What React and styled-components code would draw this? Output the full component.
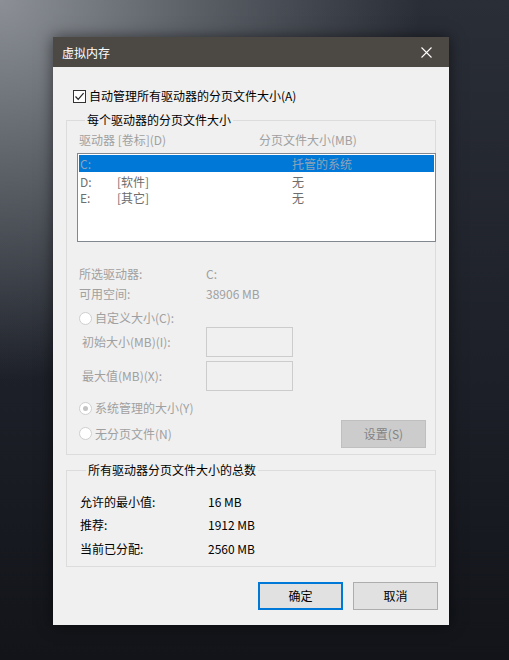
import React from 'react';
import styled, { createGlobalStyle } from 'styled-components';

const GlobalStyle = createGlobalStyle`
  html, body {
    margin: 0;
    padding: 0;
  }
  body {
    width: 509px;
    height: 660px;
    overflow: hidden;
    background:
      radial-gradient(ellipse 420px 380px at 0px 0px, #8c9096 0%, #5c6168 45%, rgba(40, 44, 54, 0) 100%),
      linear-gradient(180deg, #2a2e37 0%, #1c1f27 60%, #121419 100%);
    font-family: 'Noto Sans CJK SC', 'Noto Sans', sans-serif;
    font-size: 12px;
  }
`;

const Page = styled.div`
  padding: 37px 0 0 53px;
`;

const Dialog = styled.div`
  width: 396px;
  height: 588px;
  background: #f0f0f0;
  box-shadow: 0 0 14px rgba(0, 0, 0, 0.55);
  display: flex;
  flex-direction: column;
  color: #000;
`;

const TitleBar = styled.div`
  height: 30px;
  flex: none;
  background: #4c4844;
  display: flex;
  align-items: center;
  justify-content: space-between;
  padding-left: 9px;
  color: #fff;
  font-size: 12px;
`;

const CloseButton = styled.div`
  width: 46px;
  height: 30px;
  display: flex;
  align-items: center;
  justify-content: center;
  padding-left: 12px;
`;

const Body = styled.div`
  padding: 0 13px;
  display: flex;
  flex-direction: column;
`;

const Line = styled.div`
  display: flex;
  align-items: center;
  height: ${(p) => p.$h || 16}px;
  margin-top: ${(p) => p.$mt || 0}px;
  line-height: 16px;
  white-space: nowrap;
  color: ${(p) => (p.$disabled ? '#a0a0a0' : '#000')};
`;

const CheckBox = styled.span`
  width: 13px;
  height: 13px;
  box-sizing: border-box;
  border: 1px solid #333;
  background: #fff;
  margin: 0 3px 0 7px;
  display: flex;
  align-items: center;
  justify-content: center;
`;

const Group = styled.fieldset`
  margin: ${(p) => p.$mt}px 0 0 0;
  padding: ${(p) => p.$pad};
  border: 1px solid #dcdcdc;
  min-width: 0;
  display: flex;
  flex-direction: column;
`;

const Legend = styled.legend`
  padding: 0 2px;
  margin-left: 6px;
  line-height: 16px;
  color: #000;
`;

const Col = styled.span`
  width: ${(p) => p.$w}px;
  padding-left: ${(p) => p.$indent || 0}px;
  box-sizing: border-box;
  flex: none;
`;

const ListBox = styled.div`
  width: 359px;
  height: 89px;
  box-sizing: border-box;
  margin: 5px 0 0 -2px;
  border: 1px solid #828790;
  background: #fff;
  padding: 1px;
`;

const ListRow = styled.div`
  display: flex;
  height: 17px;
  align-items: center;
  padding-left: 1px;
  background: ${(p) => (p.$selected ? '#0078d7' : 'transparent')};
  color: ${(p) => (p.$selected ? '#8fa3b8' : '#6d6d6d')};
  line-height: 16px;
  margin-bottom: ${(p) => (p.$selected ? 1 : -1)}px;
`;

const Radio = styled.span`
  width: 13px;
  height: 13px;
  box-sizing: border-box;
  border-radius: 50%;
  border: 1px solid #cfcfcf;
  background: #fff;
  margin-right: 3px;
  display: flex;
  align-items: center;
  justify-content: center;
  &::after {
    content: '';
    width: 5px;
    height: 5px;
    border-radius: 50%;
    background: ${(p) => (p.$checked ? '#c4c4c4' : 'transparent')};
  }
`;

const TextInput = styled.div`
  width: 87px;
  height: 30px;
  box-sizing: border-box;
  border: 1px solid #cccccc;
  background: #f0f0f0;
`;

const Button = styled.div`
  width: 85px;
  height: 28px;
  box-sizing: border-box;
  display: flex;
  align-items: center;
  justify-content: center;
  background: ${(p) => (p.$disabled ? '#cccccc' : '#e1e1e1')};
  border: ${(p) =>
    p.$primary ? '2px solid #0078d7' : p.$disabled ? '1px solid #bfbfbf' : '1px solid #adadad'};
  color: ${(p) => (p.$disabled ? '#838383' : '#000')};
  line-height: 16px;
`;

const SetButton = styled(Button)`
  margin-left: auto;
  margin-right: 9px;
`;

const ButtonRow = styled.div`
  display: flex;
  justify-content: flex-end;
  gap: 10px;
  margin: 15px -2px 0 0;
`;

const App = () => {
  return (
    <Page>
      <GlobalStyle />
      <Dialog>
        <TitleBar>
          <span>虚拟内存</span>
          <CloseButton>
            <svg width='11' height='11' viewBox='0 0 11 11'>
              <path d='M0.5 0.5 L10.5 10.5 M10.5 0.5 L0.5 10.5' stroke='#fff' strokeWidth='1.1' />
            </svg>
          </CloseButton>
        </TitleBar>
        <Body>
          <Line $mt={21}>
            <CheckBox>
              <svg width='11' height='11' viewBox='0 0 11 11'>
                <path d='M1.5 5.5 L4.2 8.3 L9.6 2.2' stroke='#222' strokeWidth='1.2' fill='none' />
              </svg>
            </CheckBox>
            自动管理所有驱动器的分页文件大小(A)
          </Line>

          <Group $mt={8} $pad='4px 0 7px 12px'>
            <Legend>每个驱动器的分页文件大小</Legend>
            <Line $disabled>
              <Col $w={180}>驱动器 [卷标](D)</Col>
              <span>分页文件大小(MB)</span>
            </Line>
            <ListBox>
              <ListRow $selected>
                <Col $w={212}>C:</Col>
                <span>托管的系统</span>
              </ListRow>
              <ListRow>
                <Col $w={37}>D:</Col>
                <Col $w={175}>[软件]</Col>
                <span>无</span>
              </ListRow>
              <ListRow>
                <Col $w={37}>E:</Col>
                <Col $w={175}>[其它]</Col>
                <span>无</span>
              </ListRow>
            </ListBox>

            <Line $disabled $h={20} $mt={22}>
              <Col $w={127}>所选驱动器:</Col>
              <span>C:</span>
            </Line>
            <Line $disabled $h={20}>
              <Col $w={127}>可用空间:</Col>
              <span>38906 MB</span>
            </Line>

            <Line $disabled $mt={6}>
              <Radio />
              自定义大小(C):
            </Line>
            <Line $disabled $h={30} $mt={1}>
              <Col $w={127} $indent={3}>初始大小(MB)(I):</Col>
              <TextInput />
            </Line>
            <Line $disabled $h={30} $mt={4}>
              <Col $w={127} $indent={3}>最大值(MB)(X):</Col>
              <TextInput />
            </Line>

            <Line $disabled $mt={9}>
              <Radio $checked />
              系统管理的大小(Y)
            </Line>
            <Line $disabled $h={27} $mt={4}>
              <Radio />
              无分页文件(N)
              <SetButton $disabled>设置(S)</SetButton>
            </Line>
          </Group>

          <Group $mt={7} $pad='12px 0 5px 13px'>
            <Legend>所有驱动器分页文件大小的总数</Legend>
            <Line $h={23.5}>
              <Col $w={128}>允许的最小值:</Col>
              <span>16 MB</span>
            </Line>
            <Line $h={23.5}>
              <Col $w={128}>推荐:</Col>
              <span>1912 MB</span>
            </Line>
            <Line $h={23.5}>
              <Col $w={128}>当前已分配:</Col>
              <span>2560 MB</span>
            </Line>
          </Group>

          <ButtonRow>
            <Button $primary>确定</Button>
            <Button>取消</Button>
          </ButtonRow>
        </Body>
      </Dialog>
    </Page>
  );
};

export default App;
